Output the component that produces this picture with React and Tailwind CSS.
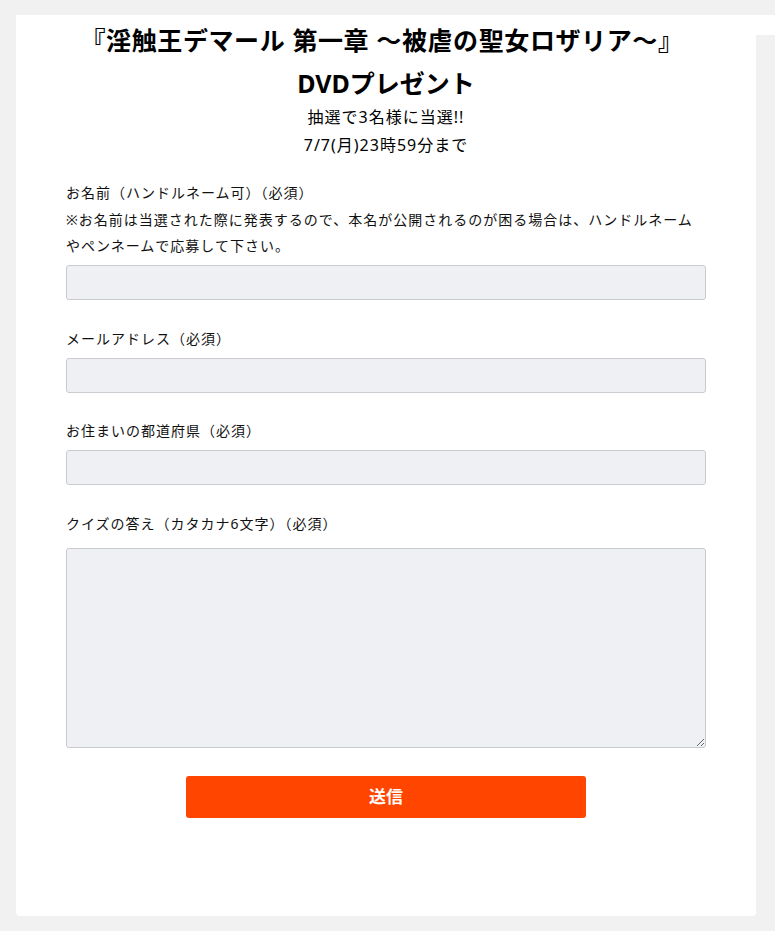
import React from 'react';

const font = "font-['Noto_Sans','Noto_Sans_CJK_JP',sans-serif]";

// Single form field: label + input or textarea
const Field = ({ label, note, multiline }) => (
  <div className="flex flex-col">
    <label className="text-[14px] leading-[26.5px] tracking-[1px] text-[#111]">
      {label}
      {note && <><br />{note}</>}
    </label>
    {multiline ? (
      <textarea className="mt-[11px] h-[200px] w-full rounded-[3px] border border-[#c9cbd0] bg-[#eef0f4] block" />
    ) : (
      <input type="text" className="mt-[5.5px] h-[35px] w-full rounded-[3px] border border-[#c9cbd0] bg-[#eef0f4]" />
    )}
  </div>
);

const App = () => {
  return (
    <div className={`min-h-[931px] bg-[#f1f1f1] pl-[16px] pt-[15px] ${font}`}>
      <div className="relative w-[740px] h-[901px] bg-white rounded-b-[4px] pt-[4px]">
        {/* white strip that runs past the card on the right */}
        <div className="absolute left-full top-0 h-[20px] w-[19px] bg-white" />

        <div className="text-center text-black">
          <h1 className="text-[25px] leading-[43px] tracking-[0.6px] font-bold pr-[8px]">
            『淫触王デマール 第一章 〜被虐の聖女ロザリア〜』
          </h1>
          <h2 className="text-[25px] leading-[43px] font-bold">DVDプレゼント</h2>
          <p className="text-[16px] leading-[28px] tracking-[1px] mt-[-2px]">抽選で3名様に当選!!</p>
          <p className="text-[16px] leading-[28px] tracking-[1px]">7/7(月)23時59分まで</p>
        </div>

        <form className="mt-[21px] px-[50px] flex flex-col gap-[25.5px]">
          <Field
            label="お名前（ハンドルネーム可）（必須）"
            note="※お名前は当選された際に発表するので、本名が公開されるのが困る場合は、ハンドルネームやペンネームで応募して下さい。"
          />
          <Field label="メールアドレス（必須）" />
          <Field label="お住まいの都道府県（必須）" />
          <Field label="クイズの答え（カタカナ6文字）（必須）" multiline />
          <div className="flex justify-center mt-[2px]">
            <button
              type="button"
              className="w-[400px] h-[42px] rounded-[3px] bg-[#ff4500] text-white text-[17px] font-bold"
            >
              送信
            </button>
          </div>
        </form>
      </div>
    </div>
  );
};

export default App;
